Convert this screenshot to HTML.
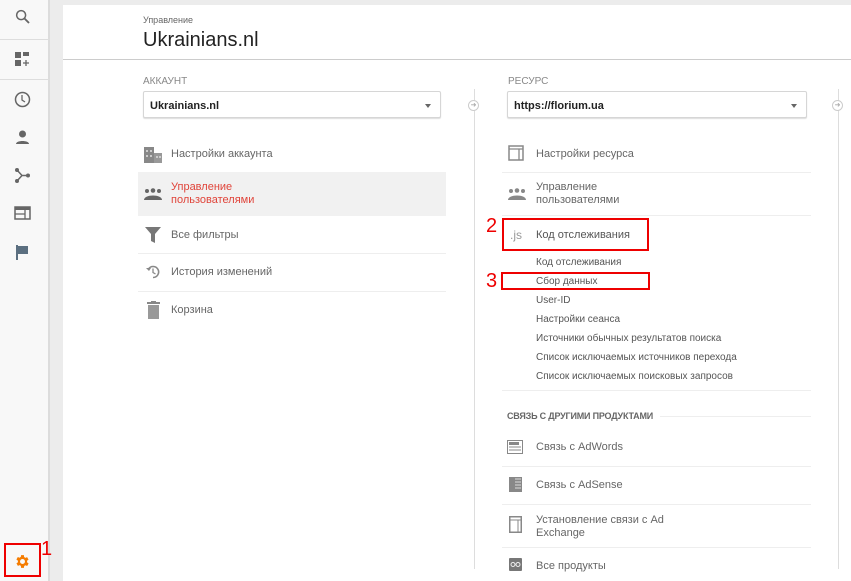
<!DOCTYPE html>
<html><head><meta charset="utf-8"><style>
*{margin:0;padding:0;box-sizing:border-box}
body{width:851px;height:581px;background:#ececec;font-family:"Liberation Sans",sans-serif;position:relative;overflow:hidden;color:#555}
.side{position:absolute;left:0;top:0;width:50px;height:581px;background:#f8f8f8;border-right:2px solid #dcdcdc}
.side .ic{position:absolute;left:14px}
.sep{position:absolute;left:0;width:50px;height:1px;background:#ddd}
.panel{position:absolute;left:63px;top:5px;width:800px;height:576px;background:#fff}
.hdr{position:absolute;left:63px;top:59px;width:788px;height:1px;background:#ccc}
.a{position:absolute;white-space:nowrap}
.item{position:absolute;font-size:11px;color:#666;line-height:13px}
.lbl{font-size:10px;color:#888}
.dd{position:absolute;height:27px;border:1px solid #d6d6d6;border-radius:2px;box-shadow:0 1px 1px #ddd;font-size:11px;font-weight:bold;color:#222;padding:8px 6px;background:#fff}
.dd:after{content:"";position:absolute;right:9px;top:12px;border:3.5px solid transparent;border-top:4px solid #666}
.line{position:absolute;height:1px;background:#eee}
.vl{position:absolute;width:1px;background:#ddd}
.circ{position:absolute;width:11px;height:11px;border:1px solid #ccc;border-radius:50%;background:#fff;font-size:7px;color:#aaa;text-align:center;line-height:9px}
.red{position:absolute;border:2px solid #e00}
.num{position:absolute;color:#e00;font-size:20px}
.sub{position:absolute;font-size:10px;color:#555;left:536px}
</style></head><body>
<div class="side">
 <svg class="ic" style="top:8px" width="18" height="18" viewBox="0 0 24 24"><circle cx="9.5" cy="9.5" r="6" fill="none" stroke="#666" stroke-width="2"/><path d="M14 14l6 6" stroke="#666" stroke-width="2.5"/></svg>
 <div class="sep" style="top:39px"></div>
 <svg class="ic" style="top:51px" width="17" height="17" viewBox="0 0 17 17"><rect x="1" y="1" width="6" height="6" fill="#666"/><rect x="9" y="1" width="6" height="4" fill="#666"/><rect x="1" y="9" width="6" height="6" fill="#666"/><path d="M12 9v6M9 12h6" stroke="#666" stroke-width="1.3"/></svg>
 <div class="sep" style="top:79px"></div>
 <svg class="ic" style="top:91px" width="17" height="17" viewBox="0 0 17 17"><circle cx="8.5" cy="8.5" r="7" fill="none" stroke="#666" stroke-width="1.5"/><path d="M8 4v5l3 2" fill="none" stroke="#666" stroke-width="1.3"/></svg>
 <svg class="ic" style="top:129px" width="17" height="17" viewBox="0 0 17 17"><circle cx="8.5" cy="5" r="3.5" fill="#666"/><path d="M2 15c0-4 13-4 13 0z" fill="#666"/></svg>
 <svg class="ic" style="top:167px" width="17" height="17" viewBox="0 0 17 17"><circle cx="3" cy="3" r="2" fill="#666"/><circle cx="3" cy="14" r="2" fill="#666"/><circle cx="14" cy="8.5" r="2" fill="#666"/><path d="M3 3l5 5.5h6M8 8.5L3 14" fill="none" stroke="#666" stroke-width="1.5"/></svg>
 <svg class="ic" style="top:205px" width="17" height="17" viewBox="0 0 17 17"><rect x="1" y="2" width="15" height="12" fill="none" stroke="#666" stroke-width="1.5"/><rect x="1" y="2" width="15" height="3" fill="#666"/><path d="M1 9h10M11 5v9" stroke="#666" stroke-width="1.3"/></svg>
 <svg class="ic" style="top:244px" width="17" height="17" viewBox="0 0 17 17"><path d="M3 1v15" stroke="#5b6f80" stroke-width="2"/><path d="M4 2h10v8H4z" fill="#5b6f80"/></svg>
 <svg class="ic" style="top:553px" width="17" height="17" viewBox="0 0 24 24"><path fill="#f57c00" d="M19.4 13a7.5 7.5 0 000-2l2.1-1.6-2-3.5-2.5 1a7 7 0 00-1.7-1L15 3h-4l-.4 2.7a7 7 0 00-1.7 1l-2.5-1-2 3.5L6.6 11a7.5 7.5 0 000 2l-2.1 1.6 2 3.5 2.5-1a7 7 0 001.7 1L11 21h4l.4-2.7a7 7 0 001.7-1l2.5 1 2-3.5zM13 15.5a3.5 3.5 0 110-7 3.5 3.5 0 010 7z" transform="translate(-1 0)"/></svg>
</div>
<div class="red" style="left:4px;top:543px;width:37px;height:34px"></div>
<div class="num" style="left:41px;top:538px">1</div>
<div class="panel"></div>
<div class="hdr"></div>
<div class="a" style="left:143px;top:15px;font-size:9px;color:#666">Управление</div>
<div class="a" style="left:143px;top:29px;font-size:20px;color:#222">Ukrainians.nl</div>

<div class="a lbl" style="left:143px;top:76px">АККАУНТ</div>
<div class="dd" style="left:143px;top:91px;width:298px">Ukrainians.nl</div>
<svg class="a" style="left:144px;top:147px" width="18" height="16" viewBox="0 0 18 16"><rect x="0" y="0" width="10" height="16" fill="#888"/><rect x="10" y="6" width="8" height="10" fill="#999"/><g fill="#ccc"><rect x="2" y="3" width="2" height="2"/><rect x="6" y="3" width="2" height="2"/><rect x="2" y="8" width="2" height="2"/><rect x="6" y="8" width="2" height="2"/><rect x="12" y="9" width="2" height="2"/><rect x="15" y="9" width="2" height="2"/></g></svg>
<div class="item" style="left:171px;top:148px">Настройки аккаунта</div>
<div class="a" style="left:138px;top:172px;width:308px;height:44px;background:#f1f1f1"></div>
<svg class="a" style="left:144px;top:188px" width="18" height="13" viewBox="0 0 18 13"><circle cx="3" cy="3" r="2" fill="#666"/><circle cx="9" cy="2.5" r="2.3" fill="#666"/><circle cx="15" cy="3" r="2" fill="#666"/><path d="M0 12c0-6 18-6 18 0z" fill="#666"/></svg>
<div class="item" style="left:171px;top:181px;color:#e0443a">Управление<br>пользователями</div>
<div class="line" style="left:138px;top:253px;width:308px"></div>
<div class="line" style="left:138px;top:291px;width:308px"></div>
<svg class="a" style="left:145px;top:227px" width="16" height="16" viewBox="0 0 16 16"><path d="M0 0h16L10 7v9l-4-2V7z" fill="#777"/></svg>
<div class="item" style="left:171px;top:229px">Все фильтры</div>
<svg class="a" style="left:146px;top:265px" width="14" height="14" viewBox="0 0 14 14"><path d="M2.5 4A5.5 5.5 0 117 12.5" fill="none" stroke="#888" stroke-width="1.6"/><path d="M0 3l3 3 2-3z" fill="#888"/><path d="M7 3.5v4l2.5 1.5" fill="none" stroke="#888" stroke-width="1.3"/></svg>
<div class="item" style="left:171px;top:266px">История изменений</div>
<svg class="a" style="left:147px;top:301px" width="13" height="18" viewBox="0 0 13 18"><rect x="0" y="1" width="13" height="2" fill="#888"/><rect x="4" y="0" width="5" height="2" fill="#888"/><rect x="1" y="4" width="11" height="14" fill="#999"/></svg>
<div class="item" style="left:171px;top:304px">Корзина</div>

<div class="vl" style="left:474px;top:89px;height:480px"></div>
<div class="vl" style="left:838px;top:89px;height:480px"></div>
<div class="circ" style="left:468px;top:100px">➜</div>
<div class="circ" style="left:832px;top:100px">➜</div>

<div class="a lbl" style="left:508px;top:76px">РЕСУРС</div>
<div class="dd" style="left:507px;top:91px;width:300px">https://florium.ua</div>
<svg class="a" style="left:508px;top:145px" width="16" height="16" viewBox="0 0 16 16"><rect x="1" y="1" width="14" height="14" fill="none" stroke="#888" stroke-width="1.5"/><path d="M1 4h14M11 4v11" stroke="#888" stroke-width="1.3"/></svg>
<div class="item" style="left:536px;top:148px">Настройки ресурса</div>
<div class="line" style="left:502px;top:172px;width:309px"></div>
<svg class="a" style="left:508px;top:188px" width="18" height="13" viewBox="0 0 18 13"><circle cx="3" cy="3" r="2" fill="#888"/><circle cx="9" cy="2.5" r="2.3" fill="#888"/><circle cx="15" cy="3" r="2" fill="#888"/><path d="M0 12c0-6 18-6 18 0z" fill="#888"/></svg>
<div class="item" style="left:536px;top:181px">Управление<br>пользователями</div>
<div class="line" style="left:502px;top:215px;width:309px"></div>
<div class="a" style="left:510px;top:228px;font-size:12px;color:#999">.js</div>
<div class="item" style="left:536px;top:229px;color:#555">Код отслеживания</div>
<div class="red" style="left:502px;top:218px;width:147px;height:33px"></div>
<div class="num" style="left:486px;top:215px">2</div>
<div class="sub" style="top:257px">Код отслеживания</div>
<div class="sub" style="top:276px">Сбор данных</div>
<div class="red" style="left:501px;top:272px;width:149px;height:18px"></div>
<div class="num" style="left:486px;top:270px">3</div>
<div class="sub" style="top:295px">User-ID</div>
<div class="sub" style="top:314px">Настройки сеанса</div>
<div class="sub" style="top:333px">Источники обычных результатов поиска</div>
<div class="sub" style="top:352px">Список исключаемых источников перехода</div>
<div class="sub" style="top:371px">Список исключаемых поисковых запросов</div>
<div class="line" style="left:502px;top:390px;width:309px"></div>
<div class="a" style="left:507px;top:411px;font-size:9px;font-weight:bold;color:#666;letter-spacing:-.2px">СВЯЗЬ С ДРУГИМИ ПРОДУКТАМИ</div>
<div class="line" style="left:660px;top:416px;width:151px"></div>
<svg class="a" style="left:507px;top:440px" width="16" height="14" viewBox="0 0 16 14"><rect x=".5" y=".5" width="15" height="13" fill="none" stroke="#888"/><rect x="2" y="2" width="10" height="3" fill="#888"/><path d="M2 7h12M2 10h12" stroke="#888"/></svg>
<div class="item" style="left:536px;top:441px">Связь с AdWords</div>
<div class="line" style="left:502px;top:466px;width:309px"></div>
<svg class="a" style="left:509px;top:477px" width="13" height="15" viewBox="0 0 13 15"><rect width="13" height="15" fill="#888"/><path d="M6 2h6M6 5h6M6 8h6M6 11h6" stroke="#ddd"/></svg>
<div class="item" style="left:536px;top:479px">Связь с AdSense</div>
<div class="line" style="left:502px;top:504px;width:309px"></div>
<svg class="a" style="left:509px;top:516px" width="13" height="17" viewBox="0 0 13 17"><rect x=".75" y=".75" width="11.5" height="15.5" fill="none" stroke="#888" stroke-width="1.5"/><path d="M1 4h11M9 4v12" stroke="#888"/></svg>
<div class="item" style="left:536px;top:514px">Установление связи с Ad<br>Exchange</div>
<div class="line" style="left:502px;top:547px;width:309px"></div>
<svg class="a" style="left:509px;top:558px" width="13" height="13" viewBox="0 0 13 13"><rect width="13" height="13" rx="1" fill="#777"/><circle cx="4" cy="6.5" r="2" fill="none" stroke="#eee"/><circle cx="9" cy="6.5" r="2" fill="none" stroke="#eee"/></svg>
<div class="item" style="left:536px;top:560px">Все продукты</div>
</body></html>
